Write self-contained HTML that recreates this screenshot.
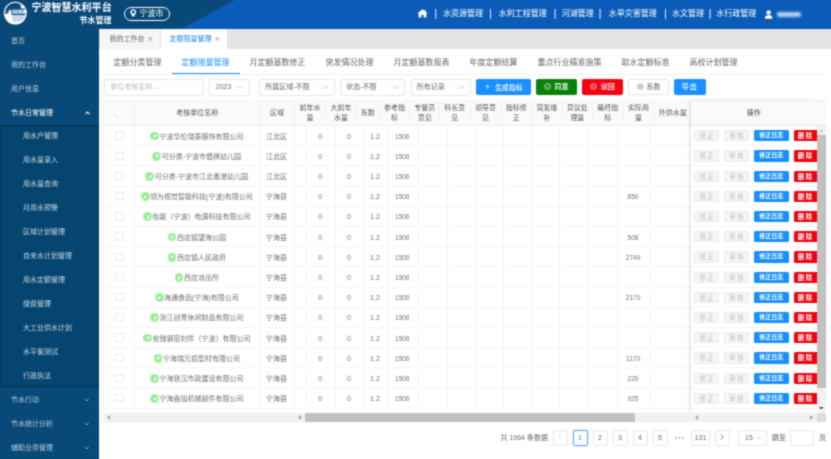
<!DOCTYPE html><html lang="zh-CN"><head><meta charset="utf-8"><title>宁波智慧水利平台 节水管理</title><style>
*{box-sizing:border-box;margin:0;padding:0}
html,body{width:831px;height:459px;overflow:hidden;background:#fff}
body{font-family:"Liberation Sans","Noto Sans CJK SC",sans-serif;font-size:7px;color:#5a5a5a;position:relative;filter:url(#soft)}
.abs{position:absolute}
#hdr{left:0;top:0;width:831px;height:28.5px;background:#0b5cb9;z-index:3}
#hdrL{left:0;top:0;width:236px;height:29px;background:#084977;clip-path:polygon(0 0,235px 0,182px 28.5px,99px 28.5px,99px 29px,0 29px);z-index:4}
#title{z-index:5;left:31.5px;top:2px;font-size:10px;font-weight:700;color:#fff;line-height:12px;white-space:nowrap;letter-spacing:0.02px}
#sub{z-index:5;left:79.5px;top:16.3px;font-size:8px;font-weight:700;color:#fff;line-height:10px;white-space:nowrap}
#city{z-index:5;left:124px;top:7px;width:45.5px;height:13.5px;border:1px solid #fff;border-radius:7px;color:#fff;font-size:8px;line-height:11.5px;white-space:nowrap}
#city span{position:absolute;left:14.5px;top:-0.5px}
#nav{z-index:5;right:0;top:0;height:28.5px;color:#fff;font-size:8px;line-height:28.5px;white-space:nowrap}
#nav span{position:absolute;top:0;line-height:28px}
#side{left:0;top:28px;width:99px;height:431px;background:#084977}
#side .it{position:absolute;left:11px;color:#b9c9d8;font-size:7px;line-height:10px;white-space:nowrap}
#side .it.w{color:#fff}
#submenu{position:absolute;left:0;top:97px;width:99px;height:261.5px;background:#06456f;box-shadow:inset 0 2px 3px -1px rgba(0,0,0,.35), inset 0 -2px 3px -1px rgba(0,0,0,.25)}
#submenu .it{left:23px;color:#c6d4e0}
.chev{position:absolute;left:85.3px;width:4px;height:4px}
#tabbar{left:99px;top:28px;width:732px;height:20.5px;background:#e4e4e4}
.tab{position:absolute;top:0.5px;height:20px;line-height:20.8px;font-size:7px;white-space:nowrap;color:#666}
.tab i{font-style:normal;color:#999;margin-left:3px;font-size:9.5px;line-height:10px;font-weight:400;vertical-align:-1.3px}
#itabs{left:103.5px;top:48.5px;width:722px;height:26px;border-bottom:1px solid #efefef}
#itabs span{position:absolute;top:8px;font-size:8px;line-height:12px;white-space:nowrap;color:#666}
#itabs span.on{color:#1890ff}
#ink{left:171.5px;top:73.3px;width:68px;height:1.2px;background:#1890ff}
.inp{position:absolute;top:79.3px;height:16.4px;border:1px solid #e8e8e8;border-radius:2px;background:#fff;font-size:7px;line-height:14px;white-space:nowrap;color:#6a6a6a}
.inp b{font-weight:400;position:absolute;left:5.2px;top:0}
.inp svg{position:absolute;right:5.5px;top:5.2px}
.btn{position:absolute;top:79.2px;height:16.3px;border-radius:2px;color:#fff;font-weight:500;font-size:7px;line-height:16px;text-align:center;white-space:nowrap}
#thead{left:103px;top:99.5px;width:722.8px;height:26.3px;background:#fafafa;border-top:1px solid #f6f6f6;border-bottom:1px solid #f0f0f0;border-left:1px solid #f6f6f6}
.th{position:absolute;top:0;height:25px;border-right:1px solid #f1f1f1;text-align:center;font-size:7px;line-height:10px;color:#5a5a5a;display:flex;align-items:center;justify-content:center}
.th span{display:block}
.vl{position:absolute;width:1px;background:#f5f5f5}
.hl{position:absolute;height:1px;background:#f6f6f6;left:103.5px;width:712.5px}
.cell{position:absolute;font-size:7px;line-height:10px;white-space:nowrap;color:#727272}
.ck{position:absolute;width:8.4px;height:8.4px;border:1px solid #ececec;border-radius:1px;background:#fff}
.gi{display:inline-block;width:8.8px;height:8.8px;border-radius:50%;background:radial-gradient(circle at 50% 50%,#8eea8e 0,#93eb93 45%,#b4f2b4 60%,#7fe37f 78%,#9aec9a 100%);vertical-align:-1.9px;margin-right:0.6px;position:relative}
.gi:after{content:"";position:absolute;left:4.4px;top:2px;left:2.5px;top:3.6px;width:4px;height:1.7px;background:#f4fff4;transform:rotate(-48deg);border-radius:1px}
#fix{left:691px;top:99.5px;width:125.5px;height:312px;background:#fff;box-shadow:-2px 0 3px rgba(0,0,0,.10)}
#fixh{left:0;top:0;width:134.8px;padding-right:9.3px;height:26px;background:#fafafa;border-top:1px solid #ececec;border-bottom:1px solid #e8e8e8;text-align:center;line-height:24px;font-size:7px;color:#444}
.rb{position:absolute;height:11.4px;border-radius:1.5px;font-size:6.4px;line-height:11.4px;text-align:center;white-space:nowrap;overflow:hidden}
.rb.d{background:#f6f6f6;border:1px solid #e9e9e9;color:#c0c0c0;line-height:9.6px;letter-spacing:1.5px;text-indent:1.5px}
.rb.b{background:#1890ff;color:#fff;font-weight:700;font-size:6px}
.rb.r{background:#f5000f;color:#fff;font-weight:700;letter-spacing:1.5px;text-indent:1px}
.pg{position:absolute;top:429.5px;height:16px;border:1px solid #e8e8e8;border-radius:2px;background:#fff;text-align:center;font-size:7px;line-height:14px;color:#6a6a6a}
</style></head><body>
<svg width="0" height="0" style="position:absolute"><filter id="soft" x="0" y="0" width="100%" height="100%" color-interpolation-filters="sRGB"><feConvolveMatrix order="3" kernelMatrix="1 2 1 2 8 2 1 2 1" divisor="20" edgeMode="duplicate" preserveAlpha="true"/></filter></svg>
<div id="hdr" class="abs"></div><div id="hdrL" class="abs"></div>
<svg class="abs" style="left:0;top:0;z-index:5" width="32" height="28" viewBox="0 0 32 28">
<defs><clipPath id="lc"><circle cx="15.3" cy="13.1" r="11"/></clipPath></defs>
<g clip-path="url(#lc)">
<path d="M3 15 L8.4 13 L9.1 9.7 L10.9 9.7 L11.8 14.9 L27 14.9 L27 25 L3 25 Z" fill="#fff"/>
<rect x="12.4" y="9.7" width="13.6" height="3.9" fill="#fff"/>
<path d="M12 16.3 C15 15.1,19 16.9,22 15.7 S25 15.3,26.4 15.3" stroke="#5f8fb8" stroke-width="0.6" fill="none"/>
<path d="M12.2 18 C15 16.8,19 18.6,22 17.4 S24.6 17,25.6 17" stroke="#5f8fb8" stroke-width="0.6" fill="none"/>
<path d="M12.4 19.7 C15 18.5,18.6 20.3,21.4 19.1 S23.6 18.8,24.4 18.8" stroke="#5f8fb8" stroke-width="0.6" fill="none"/>
<path d="M12.8 21.3 C15 20.2,17.8 21.8,20 20.8 S21.8 20.5,22.4 20.5" stroke="#5f8fb8" stroke-width="0.55" fill="none"/>
<path d="M5.4 11.6 L8 10.9 L7.8 12.4 L5.8 13Z" fill="#4d86b3"/>
</g>
<circle cx="15.3" cy="13.1" r="10.9" fill="none" stroke="#fff" stroke-width="1.1"/>
<circle cx="22.5" cy="7.1" r="1.75" fill="#fff"/>
<path d="M19 4.4 L21.6 6 L22.6 5.4 Z" fill="#e6eef6"/>
<circle cx="20.3" cy="5" r="0.6" fill="#e8f0f8"/>
<text x="12.9" y="13.1" font-family="Liberation Serif,serif" font-size="4.2" font-weight="700" fill="#3f78a8" textLength="12.4" lengthAdjust="spacingAndGlyphs">NBSL</text>
</svg>
<div id="title" class="abs">宁波智慧水利平台</div><div id="sub" class="abs">节水管理</div>
<div id="city" class="abs"><svg style="position:absolute;left:5px;top:1.3px" width="6.5" height="8.4" viewBox="0 0 6 8" preserveAspectRatio="none"><path d="M3 0.2C1.4 0.2 0.3 1.4 0.3 2.9C0.3 4.6 3 7.8 3 7.8S5.7 4.6 5.7 2.9C5.7 1.4 4.6 0.2 3 0.2Z" fill="#fff"/><circle cx="3" cy="2.9" r="1.45" fill="#084977"/></svg><span>宁波市</span></div>
<div id="nav" class="abs" style="left:400px;width:431px">
<svg style="position:absolute;left:17px;top:9px" width="11" height="9" viewBox="0 0 10 9" preserveAspectRatio="none"><path d="M5 0.3L0.2 4.6H1.5V8.6H4V5.8H6V8.6H8.5V4.6H9.8L8 3V0.9H7V2.1Z" fill="#fff"/></svg>
<span style="left:34.45px;font-size:10px;line-height:27px">|</span>
<span style="left:43px">水资源管理</span>
<span style="left:89.2px;font-size:10px;line-height:27px">|</span>
<span style="left:98.75px">水利工程管理</span>
<span style="left:153.7px;font-size:10px;line-height:27px">|</span>
<span style="left:161.75px">河湖管理</span>
<span style="left:198.7px;font-size:10px;line-height:27px">|</span>
<span style="left:208.75px">水旱灾害管理</span>
<span style="left:264.2px;font-size:10px;line-height:27px">|</span>
<span style="left:272px">水文管理</span>
<span style="left:308.7px;font-size:10px;line-height:27px">|</span>
<span style="left:316.25px">水行政管理</span>
<svg style="position:absolute;left:363.75px;top:9.5px" width="9.25" height="9" viewBox="0 0 8 9"><circle cx="4" cy="2.4" r="2.2" fill="#fff"/><path d="M0.2 8.8C0.2 6 1.8 5 4 5S7.8 6 7.8 8.8Z" fill="#fff"/></svg>
<div style="position:absolute;left:376.5px;top:11.5px;width:24.5px;height:5px;background:#b5cff0;border-radius:2px;filter:blur(0.8px)"></div>
</div>
<div id="side" class="abs">
<div class="it" style="top:8px">首页</div>
<div class="it" style="top:31.799999999999997px">我的工作台</div>
<div class="it" style="top:55.599999999999994px">用户信息</div>
<div class="it w" style="top:79.6px">节水日常管理</div>
<svg class="chev" style="top:82.89999999999999px;width:5px;left:84.8px" viewBox="0 0 5 4"><path d="M0.5 3.2L2.5 1L4.5 3.2" stroke="#fff" stroke-width="1.05" fill="none"/></svg>
<div id="submenu">
<div class="it" style="top:6.4px">用水户管理</div>
<div class="it" style="top:30.4px">用水量录入</div>
<div class="it" style="top:54.4px">用水量查询</div>
<div class="it" style="top:78.4px">月用水预警</div>
<div class="it" style="top:102.4px">区域计划管理</div>
<div class="it" style="top:126.4px">自来水计划管理</div>
<div class="it" style="top:150.4px">用水定额管理</div>
<div class="it" style="top:174.4px">缴费管理</div>
<div class="it" style="top:198.4px">大工业供水计划</div>
<div class="it" style="top:222.4px">水平衡测试</div>
<div class="it" style="top:246.4px">行政执法</div>
</div>
<div class="it" style="top:366.5px">节水行动</div>
<svg class="chev" style="top:369.5px" viewBox="0 0 4 4"><path d="M0.4 1.2L2 3L3.6 1.2" stroke="#b9c8d8" stroke-width="0.8" fill="none"/></svg>
<div class="it" style="top:390.5px">节水统计分析</div>
<svg class="chev" style="top:393.5px" viewBox="0 0 4 4"><path d="M0.4 1.2L2 3L3.6 1.2" stroke="#b9c8d8" stroke-width="0.8" fill="none"/></svg>
<div class="it" style="top:414.5px">辅助业务管理</div>
<svg class="chev" style="top:417.5px" viewBox="0 0 4 4"><path d="M0.4 1.2L2 3L3.6 1.2" stroke="#b9c8d8" stroke-width="0.8" fill="none"/></svg>
</div>
<div id="tabbar" class="abs">
<div class="tab" style="left:1px;width:60.5px;background:#f6f6f6;padding-left:9.5px;border-right:1px solid #e0e0e0">我的工作台<i>×</i></div>
<div class="tab" style="left:61.5px;width:66px;background:#fff;padding-left:9px;color:#1e88e5">定额限量管理<i>×</i></div>
</div>
<div id="itabs" class="abs">
<span style="left:10.0px">定额分类管理</span>
<span class="on" style="left:78.0px">定额限量管理</span>
<span style="left:146.0px">月定额基数修正</span>
<span style="left:222.0px">突发情况处理</span>
<span style="left:290.0px">月定额基数报表</span>
<span style="left:366.0px">年度定额结算</span>
<span style="left:434.0px">重点行业精准施策</span>
<span style="left:518.0px">取水定额标准</span>
<span style="left:586.0px">高校计划管理</span>
</div><div id="ink" class="abs"></div>
<div class="inp" style="left:104px;width:100px"><b style="color:#bfbfbf">单位考核名称...</b></div>
<div class="inp" style="left:209px;width:40.5px"><b style="left:5.8px">2023</b><svg width="6.5" height="4.5" viewBox="0 0 6.5 4.5"><path d="M0.5 0.8L3.25 3.7L6 0.8" stroke="#bdbdbd" stroke-width="0.75" fill="none"/></svg></div>
<div class="inp" style="left:259px;width:75.5px"><b>所属区域-不限</b><svg width="6.5" height="4.5" viewBox="0 0 6.5 4.5"><path d="M0.5 0.8L3.25 3.7L6 0.8" stroke="#bdbdbd" stroke-width="0.75" fill="none"/></svg></div>
<div class="inp" style="left:340px;width:65px"><b>状态-不限</b><svg width="6.5" height="4.5" viewBox="0 0 6.5 4.5"><path d="M0.5 0.8L3.25 3.7L6 0.8" stroke="#bdbdbd" stroke-width="0.75" fill="none"/></svg></div>
<div class="inp" style="left:410.5px;width:60px"><b>所有记录</b><svg width="6.5" height="4.5" viewBox="0 0 6.5 4.5"><path d="M0.5 0.8L3.25 3.7L6 0.8" stroke="#bdbdbd" stroke-width="0.75" fill="none"/></svg></div>
<div class="btn" style="left:476px;width:55px;background:#1890ff"><span style="font-size:9px;vertical-align:-0.5px;margin-right:4.5px;margin-left:1px">+</span>生成指标</div>
<div class="btn" style="left:535.8px;width:41.4px;background:#0a820a"><svg width="7" height="7" viewBox="0 0 7 7" style="vertical-align:-1.2px;margin-right:3px"><circle cx="3.5" cy="3.5" r="2.9" fill="none" stroke="#fff" stroke-width="0.7"/><path d="M2.1 3.6L3.1 4.6L4.9 2.6" stroke="#fff" stroke-width="0.7" fill="none"/></svg>同意</div>
<div class="btn" style="left:582px;width:40.6px;background:#f5000f"><svg width="7" height="7" viewBox="0 0 7 7" style="vertical-align:-1.2px;margin-right:3px"><circle cx="3.5" cy="3.5" r="2.9" fill="none" stroke="#fff" stroke-width="0.7"/><path d="M2.4 2.4L4.6 4.6M4.6 2.4L2.4 4.6" stroke="#fff" stroke-width="0.7" fill="none"/></svg><span style="margin-left:1px">驳回</span></div>
<div class="btn" style="left:628px;width:41px;background:#fff;border:1px solid #e4e4e4;color:#666;font-weight:400;line-height:14px"><svg width="7" height="7" viewBox="0 0 7 7" style="vertical-align:-1.2px;margin-right:3px"><circle cx="3.5" cy="3.5" r="2.6" fill="none" stroke="#666" stroke-width="1" stroke-dasharray="1.2 0.8"/><circle cx="3.5" cy="3.5" r="1" fill="none" stroke="#666" stroke-width="0.6"/></svg>系数</div>
<div class="btn" style="left:674px;width:31.5px;background:#1890ff;letter-spacing:1px">导出</div>
<div id="thead" class="abs">
<div class="th" style="left:0px;width:31.3px"><span><span class="ck" style="position:static;display:block"></span></span></div>
<div class="th" style="left:31.3px;width:124.7px"><span>考核单位名称</span></div>
<div class="th" style="left:156px;width:35px"><span>区域</span></div>
<div class="th" style="left:191px;width:31px"><span>前年水<br>量</span></div>
<div class="th" style="left:222px;width:30.8px"><span>大前年<br>水量</span></div>
<div class="th" style="left:252.8px;width:22.8px"><span>系数</span></div>
<div class="th" style="left:275.6px;width:30.9px"><span>参考指<br>标</span></div>
<div class="th" style="left:306.5px;width:29.5px"><span>专管员<br>意见</span></div>
<div class="th" style="left:336px;width:30.5px"><span>科长意<br>见</span></div>
<div class="th" style="left:366.5px;width:31.0px"><span>领导意<br>见</span></div>
<div class="th" style="left:397.5px;width:30.5px"><span>指标修<br>正</span></div>
<div class="th" style="left:428px;width:30.75px"><span>突发增<br>补</span></div>
<div class="th" style="left:458.75px;width:30.25px"><span>异议处<br>理量</span></div>
<div class="th" style="left:489px;width:30.5px"><span>最终指<br>标</span></div>
<div class="th" style="left:519.5px;width:31.0px"><span>实际用<br>量</span></div>
<div class="th" style="left:550.5px;width:37.5px"><span>外供水量</span></div>
</div>
<div class="vl" style="left:103px;top:125.5px;height:282.8px"></div>
<div class="vl" style="left:134px;top:125.5px;height:282.8px"></div>
<div class="vl" style="left:259px;top:125.5px;height:282.8px"></div>
<div class="vl" style="left:306px;top:125.5px;height:282.8px"></div>
<div class="vl" style="left:334.6px;top:125.5px;height:282.8px"></div>
<div class="vl" style="left:363.4px;top:125.5px;height:282.8px"></div>
<div class="vl" style="left:386.5px;top:125.5px;height:282.8px"></div>
<div class="vl" style="left:418px;top:125.5px;height:282.8px"></div>
<div class="vl" style="left:446.6px;top:125.5px;height:282.8px"></div>
<div class="vl" style="left:475.3px;top:125.5px;height:282.8px"></div>
<div class="vl" style="left:502.8px;top:125.5px;height:282.8px"></div>
<div class="vl" style="left:531px;top:125.5px;height:282.8px"></div>
<div class="vl" style="left:559.3px;top:125.5px;height:282.8px"></div>
<div class="vl" style="left:588.3px;top:125.5px;height:282.8px"></div>
<div class="vl" style="left:616.6px;top:125.5px;height:282.8px"></div>
<div class="vl" style="left:649.5px;top:125.5px;height:282.8px"></div>
<div class="vl" style="left:691px;top:125.5px;height:282.8px"></div>
<div class="vl" style="left:294px;top:125.5px;height:282.8px;background:#f6f6f6"></div>
<div class="hl" style="top:145.2px"></div>
<div class="hl" style="top:165.4px"></div>
<div class="hl" style="top:185.6px"></div>
<div class="hl" style="top:205.8px"></div>
<div class="hl" style="top:226.0px"></div>
<div class="hl" style="top:246.2px"></div>
<div class="hl" style="top:266.4px"></div>
<div class="hl" style="top:286.6px"></div>
<div class="hl" style="top:306.8px"></div>
<div class="hl" style="top:327.0px"></div>
<div class="hl" style="top:347.2px"></div>
<div class="hl" style="top:367.4px"></div>
<div class="hl" style="top:387.6px"></div>
<div class="hl" style="top:407.8px"></div>
<div class="ck" style="left:115.2px;top:131.4px"></div>
<div class="cell" style="left:134.5px;width:124.5px;top:131.5px;text-align:center"><i class="gi"></i>宁波华伦瑞泰服饰有限公司</div>
<div class="cell" style="left:259px;width:35px;top:131.5px;text-align:center">江北区</div>
<div class="cell" style="left:306px;width:28.6px;top:131.5px;text-align:center">0</div>
<div class="cell" style="left:334.6px;width:28.8px;top:131.5px;text-align:center">0</div>
<div class="cell" style="left:363.4px;width:23.1px;top:131.5px;text-align:center">1.2</div>
<div class="cell" style="left:386.5px;width:31.5px;top:131.5px;text-align:center;font-size:6.5px">1500</div>
<div class="ck" style="left:115.2px;top:151.6px"></div>
<div class="cell" style="left:134.5px;width:124.5px;top:151.7px;text-align:center"><i class="gi"></i>可分类-宁波市倡祺幼儿园</div>
<div class="cell" style="left:259px;width:35px;top:151.7px;text-align:center">江北区</div>
<div class="cell" style="left:306px;width:28.6px;top:151.7px;text-align:center">0</div>
<div class="cell" style="left:334.6px;width:28.8px;top:151.7px;text-align:center">0</div>
<div class="cell" style="left:363.4px;width:23.1px;top:151.7px;text-align:center">1.2</div>
<div class="cell" style="left:386.5px;width:31.5px;top:151.7px;text-align:center;font-size:6.5px">1500</div>
<div class="ck" style="left:115.2px;top:171.8px"></div>
<div class="cell" style="left:134.5px;width:124.5px;top:171.9px;text-align:center"><i class="gi"></i>可分类-宁波市江北甬港幼儿园</div>
<div class="cell" style="left:259px;width:35px;top:171.9px;text-align:center">江北区</div>
<div class="cell" style="left:306px;width:28.6px;top:171.9px;text-align:center">0</div>
<div class="cell" style="left:334.6px;width:28.8px;top:171.9px;text-align:center">0</div>
<div class="cell" style="left:363.4px;width:23.1px;top:171.9px;text-align:center">1.2</div>
<div class="cell" style="left:386.5px;width:31.5px;top:171.9px;text-align:center;font-size:6.5px">1500</div>
<div class="ck" style="left:115.2px;top:192.0px"></div>
<div class="cell" style="left:134.5px;width:124.5px;top:192.1px;text-align:center"><i class="gi"></i>领为视觉智能科技(宁波)有限公司</div>
<div class="cell" style="left:259px;width:35px;top:192.1px;text-align:center">宁海县</div>
<div class="cell" style="left:306px;width:28.6px;top:192.1px;text-align:center">0</div>
<div class="cell" style="left:334.6px;width:28.8px;top:192.1px;text-align:center">0</div>
<div class="cell" style="left:363.4px;width:23.1px;top:192.1px;text-align:center">1.2</div>
<div class="cell" style="left:386.5px;width:31.5px;top:192.1px;text-align:center;font-size:6.5px">1500</div>
<div class="cell" style="left:616.6px;width:32.9px;top:192.1px;text-align:center;font-size:6.5px">850</div>
<div class="ck" style="left:115.2px;top:212.2px"></div>
<div class="cell" style="left:134.5px;width:124.5px;top:212.3px;text-align:center"><i class="gi"></i>怡能（宁波）电源科技有限公司</div>
<div class="cell" style="left:259px;width:35px;top:212.3px;text-align:center">宁海县</div>
<div class="cell" style="left:306px;width:28.6px;top:212.3px;text-align:center">0</div>
<div class="cell" style="left:334.6px;width:28.8px;top:212.3px;text-align:center">0</div>
<div class="cell" style="left:363.4px;width:23.1px;top:212.3px;text-align:center">1.2</div>
<div class="cell" style="left:386.5px;width:31.5px;top:212.3px;text-align:center;font-size:6.5px">1500</div>
<div class="ck" style="left:115.2px;top:232.4px"></div>
<div class="cell" style="left:134.5px;width:124.5px;top:232.5px;text-align:center"><i class="gi"></i>西店镇望海公园</div>
<div class="cell" style="left:259px;width:35px;top:232.5px;text-align:center">宁海县</div>
<div class="cell" style="left:306px;width:28.6px;top:232.5px;text-align:center">0</div>
<div class="cell" style="left:334.6px;width:28.8px;top:232.5px;text-align:center">0</div>
<div class="cell" style="left:363.4px;width:23.1px;top:232.5px;text-align:center">1.2</div>
<div class="cell" style="left:386.5px;width:31.5px;top:232.5px;text-align:center;font-size:6.5px">1500</div>
<div class="cell" style="left:616.6px;width:32.9px;top:232.5px;text-align:center;font-size:6.5px">508</div>
<div class="ck" style="left:115.2px;top:252.6px"></div>
<div class="cell" style="left:134.5px;width:124.5px;top:252.7px;text-align:center"><i class="gi"></i>西店镇人民政府</div>
<div class="cell" style="left:259px;width:35px;top:252.7px;text-align:center">宁海县</div>
<div class="cell" style="left:306px;width:28.6px;top:252.7px;text-align:center">0</div>
<div class="cell" style="left:334.6px;width:28.8px;top:252.7px;text-align:center">0</div>
<div class="cell" style="left:363.4px;width:23.1px;top:252.7px;text-align:center">1.2</div>
<div class="cell" style="left:386.5px;width:31.5px;top:252.7px;text-align:center;font-size:6.5px">1500</div>
<div class="cell" style="left:616.6px;width:32.9px;top:252.7px;text-align:center;font-size:6.5px">2749</div>
<div class="ck" style="left:115.2px;top:272.8px"></div>
<div class="cell" style="left:134.5px;width:124.5px;top:272.9px;text-align:center"><i class="gi"></i>西店派出所</div>
<div class="cell" style="left:259px;width:35px;top:272.9px;text-align:center">宁海县</div>
<div class="cell" style="left:306px;width:28.6px;top:272.9px;text-align:center">0</div>
<div class="cell" style="left:334.6px;width:28.8px;top:272.9px;text-align:center">0</div>
<div class="cell" style="left:363.4px;width:23.1px;top:272.9px;text-align:center">1.2</div>
<div class="cell" style="left:386.5px;width:31.5px;top:272.9px;text-align:center;font-size:6.5px">1500</div>
<div class="ck" style="left:115.2px;top:293.0px"></div>
<div class="cell" style="left:134.5px;width:124.5px;top:293.1px;text-align:center"><i class="gi"></i>海通食品(宁海)有限公司</div>
<div class="cell" style="left:259px;width:35px;top:293.1px;text-align:center">宁海县</div>
<div class="cell" style="left:306px;width:28.6px;top:293.1px;text-align:center">0</div>
<div class="cell" style="left:334.6px;width:28.8px;top:293.1px;text-align:center">0</div>
<div class="cell" style="left:363.4px;width:23.1px;top:293.1px;text-align:center">1.2</div>
<div class="cell" style="left:386.5px;width:31.5px;top:293.1px;text-align:center;font-size:6.5px">1500</div>
<div class="cell" style="left:616.6px;width:32.9px;top:293.1px;text-align:center;font-size:6.5px">2170</div>
<div class="ck" style="left:115.2px;top:313.2px"></div>
<div class="cell" style="left:134.5px;width:124.5px;top:313.3px;text-align:center"><i class="gi"></i>浙江创青休闲制品有限公司</div>
<div class="cell" style="left:259px;width:35px;top:313.3px;text-align:center">宁海县</div>
<div class="cell" style="left:306px;width:28.6px;top:313.3px;text-align:center">0</div>
<div class="cell" style="left:334.6px;width:28.8px;top:313.3px;text-align:center">0</div>
<div class="cell" style="left:363.4px;width:23.1px;top:313.3px;text-align:center">1.2</div>
<div class="cell" style="left:386.5px;width:31.5px;top:313.3px;text-align:center;font-size:6.5px">1500</div>
<div class="ck" style="left:115.2px;top:333.4px"></div>
<div class="cell" style="left:134.5px;width:124.5px;top:333.5px;text-align:center"><i class="gi"></i>安驰钢密封件（宁波）有限公司</div>
<div class="cell" style="left:259px;width:35px;top:333.5px;text-align:center">宁海县</div>
<div class="cell" style="left:306px;width:28.6px;top:333.5px;text-align:center">0</div>
<div class="cell" style="left:334.6px;width:28.8px;top:333.5px;text-align:center">0</div>
<div class="cell" style="left:363.4px;width:23.1px;top:333.5px;text-align:center">1.2</div>
<div class="cell" style="left:386.5px;width:31.5px;top:333.5px;text-align:center;font-size:6.5px">1500</div>
<div class="ck" style="left:115.2px;top:353.6px"></div>
<div class="cell" style="left:134.5px;width:124.5px;top:353.7px;text-align:center"><i class="gi"></i>宁海瑞元铝型材有限公司</div>
<div class="cell" style="left:259px;width:35px;top:353.7px;text-align:center">宁海县</div>
<div class="cell" style="left:306px;width:28.6px;top:353.7px;text-align:center">0</div>
<div class="cell" style="left:334.6px;width:28.8px;top:353.7px;text-align:center">0</div>
<div class="cell" style="left:363.4px;width:23.1px;top:353.7px;text-align:center">1.2</div>
<div class="cell" style="left:386.5px;width:31.5px;top:353.7px;text-align:center;font-size:6.5px">1500</div>
<div class="cell" style="left:616.6px;width:32.9px;top:353.7px;text-align:center;font-size:6.5px">1170</div>
<div class="ck" style="left:115.2px;top:373.8px"></div>
<div class="cell" style="left:134.5px;width:124.5px;top:373.9px;text-align:center"><i class="gi"></i>宁海铁汉市政建设有限公司</div>
<div class="cell" style="left:259px;width:35px;top:373.9px;text-align:center">宁海县</div>
<div class="cell" style="left:306px;width:28.6px;top:373.9px;text-align:center">0</div>
<div class="cell" style="left:334.6px;width:28.8px;top:373.9px;text-align:center">0</div>
<div class="cell" style="left:363.4px;width:23.1px;top:373.9px;text-align:center">1.2</div>
<div class="cell" style="left:386.5px;width:31.5px;top:373.9px;text-align:center;font-size:6.5px">1500</div>
<div class="cell" style="left:616.6px;width:32.9px;top:373.9px;text-align:center;font-size:6.5px">220</div>
<div class="ck" style="left:115.2px;top:394.0px"></div>
<div class="cell" style="left:134.5px;width:124.5px;top:394.1px;text-align:center"><i class="gi"></i>宁海鑫旭机械部件有限公司</div>
<div class="cell" style="left:259px;width:35px;top:394.1px;text-align:center">宁海县</div>
<div class="cell" style="left:306px;width:28.6px;top:394.1px;text-align:center">0</div>
<div class="cell" style="left:334.6px;width:28.8px;top:394.1px;text-align:center">0</div>
<div class="cell" style="left:363.4px;width:23.1px;top:394.1px;text-align:center">1.2</div>
<div class="cell" style="left:386.5px;width:31.5px;top:394.1px;text-align:center;font-size:6.5px">1500</div>
<div class="cell" style="left:616.6px;width:32.9px;top:394.1px;text-align:center;font-size:6.5px">925</div>
<div id="fix" class="abs"><div id="fixh" class="abs">操作</div>
<div class="hl" style="left:0;width:125.5px;top:45.7px"></div>
<div class="rb d" style="left:3.2px;width:24.8px;top:30.6px">修正</div>
<div class="rb d" style="left:33px;width:24.8px;top:30.6px">审核</div>
<div class="rb b" style="left:62.7px;width:35px;top:30.6px">修正日志</div>
<div class="rb r" style="left:102.7px;width:23px;top:30.6px;border-radius:1.5px 0 0 1.5px">删除</div>
<div class="hl" style="left:0;width:125.5px;top:65.9px"></div>
<div class="rb d" style="left:3.2px;width:24.8px;top:50.8px">修正</div>
<div class="rb d" style="left:33px;width:24.8px;top:50.8px">审核</div>
<div class="rb b" style="left:62.7px;width:35px;top:50.8px">修正日志</div>
<div class="rb r" style="left:102.7px;width:23px;top:50.8px;border-radius:1.5px 0 0 1.5px">删除</div>
<div class="hl" style="left:0;width:125.5px;top:86.1px"></div>
<div class="rb d" style="left:3.2px;width:24.8px;top:71.0px">修正</div>
<div class="rb d" style="left:33px;width:24.8px;top:71.0px">审核</div>
<div class="rb b" style="left:62.7px;width:35px;top:71.0px">修正日志</div>
<div class="rb r" style="left:102.7px;width:23px;top:71.0px;border-radius:1.5px 0 0 1.5px">删除</div>
<div class="hl" style="left:0;width:125.5px;top:106.3px"></div>
<div class="rb d" style="left:3.2px;width:24.8px;top:91.2px">修正</div>
<div class="rb d" style="left:33px;width:24.8px;top:91.2px">审核</div>
<div class="rb b" style="left:62.7px;width:35px;top:91.2px">修正日志</div>
<div class="rb r" style="left:102.7px;width:23px;top:91.2px;border-radius:1.5px 0 0 1.5px">删除</div>
<div class="hl" style="left:0;width:125.5px;top:126.5px"></div>
<div class="rb d" style="left:3.2px;width:24.8px;top:111.4px">修正</div>
<div class="rb d" style="left:33px;width:24.8px;top:111.4px">审核</div>
<div class="rb b" style="left:62.7px;width:35px;top:111.4px">修正日志</div>
<div class="rb r" style="left:102.7px;width:23px;top:111.4px;border-radius:1.5px 0 0 1.5px">删除</div>
<div class="hl" style="left:0;width:125.5px;top:146.7px"></div>
<div class="rb d" style="left:3.2px;width:24.8px;top:131.6px">修正</div>
<div class="rb d" style="left:33px;width:24.8px;top:131.6px">审核</div>
<div class="rb b" style="left:62.7px;width:35px;top:131.6px">修正日志</div>
<div class="rb r" style="left:102.7px;width:23px;top:131.6px;border-radius:1.5px 0 0 1.5px">删除</div>
<div class="hl" style="left:0;width:125.5px;top:166.9px"></div>
<div class="rb d" style="left:3.2px;width:24.8px;top:151.8px">修正</div>
<div class="rb d" style="left:33px;width:24.8px;top:151.8px">审核</div>
<div class="rb b" style="left:62.7px;width:35px;top:151.8px">修正日志</div>
<div class="rb r" style="left:102.7px;width:23px;top:151.8px;border-radius:1.5px 0 0 1.5px">删除</div>
<div class="hl" style="left:0;width:125.5px;top:187.1px"></div>
<div class="rb d" style="left:3.2px;width:24.8px;top:172.0px">修正</div>
<div class="rb d" style="left:33px;width:24.8px;top:172.0px">审核</div>
<div class="rb b" style="left:62.7px;width:35px;top:172.0px">修正日志</div>
<div class="rb r" style="left:102.7px;width:23px;top:172.0px;border-radius:1.5px 0 0 1.5px">删除</div>
<div class="hl" style="left:0;width:125.5px;top:207.3px"></div>
<div class="rb d" style="left:3.2px;width:24.8px;top:192.2px">修正</div>
<div class="rb d" style="left:33px;width:24.8px;top:192.2px">审核</div>
<div class="rb b" style="left:62.7px;width:35px;top:192.2px">修正日志</div>
<div class="rb r" style="left:102.7px;width:23px;top:192.2px;border-radius:1.5px 0 0 1.5px">删除</div>
<div class="hl" style="left:0;width:125.5px;top:227.5px"></div>
<div class="rb d" style="left:3.2px;width:24.8px;top:212.4px">修正</div>
<div class="rb d" style="left:33px;width:24.8px;top:212.4px">审核</div>
<div class="rb b" style="left:62.7px;width:35px;top:212.4px">修正日志</div>
<div class="rb r" style="left:102.7px;width:23px;top:212.4px;border-radius:1.5px 0 0 1.5px">删除</div>
<div class="hl" style="left:0;width:125.5px;top:247.7px"></div>
<div class="rb d" style="left:3.2px;width:24.8px;top:232.6px">修正</div>
<div class="rb d" style="left:33px;width:24.8px;top:232.6px">审核</div>
<div class="rb b" style="left:62.7px;width:35px;top:232.6px">修正日志</div>
<div class="rb r" style="left:102.7px;width:23px;top:232.6px;border-radius:1.5px 0 0 1.5px">删除</div>
<div class="hl" style="left:0;width:125.5px;top:267.9px"></div>
<div class="rb d" style="left:3.2px;width:24.8px;top:252.8px">修正</div>
<div class="rb d" style="left:33px;width:24.8px;top:252.8px">审核</div>
<div class="rb b" style="left:62.7px;width:35px;top:252.8px">修正日志</div>
<div class="rb r" style="left:102.7px;width:23px;top:252.8px;border-radius:1.5px 0 0 1.5px">删除</div>
<div class="hl" style="left:0;width:125.5px;top:288.1px"></div>
<div class="rb d" style="left:3.2px;width:24.8px;top:273.0px">修正</div>
<div class="rb d" style="left:33px;width:24.8px;top:273.0px">审核</div>
<div class="rb b" style="left:62.7px;width:35px;top:273.0px">修正日志</div>
<div class="rb r" style="left:102.7px;width:23px;top:273.0px;border-radius:1.5px 0 0 1.5px">删除</div>
<div class="hl" style="left:0;width:125.5px;top:308.3px"></div>
<div class="rb d" style="left:3.2px;width:24.8px;top:293.2px">修正</div>
<div class="rb d" style="left:33px;width:24.8px;top:293.2px">审核</div>
<div class="rb b" style="left:62.7px;width:35px;top:293.2px">修正日志</div>
<div class="rb r" style="left:102.7px;width:23px;top:293.2px;border-radius:1.5px 0 0 1.5px">删除</div>
</div>
<div class="abs" style="left:816.5px;top:126.3px;width:9.5px;height:286px;background:#f1f1f1"></div>
<div class="abs" style="left:816.5px;top:135.4px;width:9.5px;height:253px;background:#c1c1c1"></div>
<svg class="abs" style="left:819px;top:129.5px" width="4.4" height="2.6" viewBox="0 0 5 3"><path d="M0 3L2.5 0L5 3Z" fill="#a8a8a8"/></svg>
<svg class="abs" style="left:819px;top:406.5px" width="4.6" height="2.8" viewBox="0 0 5 3"><path d="M0 0L2.5 3L5 0Z" fill="#505050"/></svg>
<div class="abs" style="left:103.5px;top:412.8px;width:722.5px;height:9.2px;background:#f1f1f1"></div>
<div class="abs" style="left:305px;top:412.8px;width:329.5px;height:9.2px;background:#c1c1c1"></div>
<div class="abs" style="left:816.5px;top:412.8px;width:9.5px;height:9.2px;background:#dcdcdc"></div>
<svg class="abs" style="left:106.5px;top:414.5px" width="3" height="5" viewBox="0 0 3 5"><path d="M3 0L0 2.5L3 5Z" fill="#a3a3a3"/></svg>
<svg class="abs" style="left:298.5px;top:414.5px" width="3" height="5" viewBox="0 0 3 5"><path d="M0 0L3 2.5L0 5Z" fill="#a3a3a3"/></svg>
<svg class="abs" style="left:695px;top:414.5px" width="3" height="5" viewBox="0 0 3 5"><path d="M3 0L0 2.5L3 5Z" fill="#a3a3a3"/></svg>
<svg class="abs" style="left:810px;top:414.5px" width="3" height="5" viewBox="0 0 3 5"><path d="M0 0L3 2.5L0 5Z" fill="#a3a3a3"/></svg>
<div class="abs" style="left:500.5px;top:432.5px;font-size:7px;line-height:10px;white-space:nowrap;color:#6a6a6a">共 1964 条数据</div>
<div class="pg" style="left:552.5px;width:15px;color:#c8c8c8"><svg width="4" height="6" viewBox="0 0 4 6" style="vertical-align:-0.5px"><path d="M3.2 0.5L0.8 3L3.2 5.5" stroke="#c0c0c0" stroke-width="0.7" fill="none"/></svg></div>
<div class="pg" style="left:572.5px;width:15px;border-color:#5aaaf8;color:#1890ff;box-shadow:0 0 0 1px rgba(24,144,255,.12)">1</div>
<div class="pg" style="left:592.5px;width:15px">2</div>
<div class="pg" style="left:612.5px;width:15px">3</div>
<div class="pg" style="left:632.5px;width:15px">4</div>
<div class="pg" style="left:652.5px;width:15px">5</div>
<div class="abs" style="left:672.5px;top:429.5px;width:15px;text-align:center;font-size:7px;line-height:15px;color:#bbb;letter-spacing:1px">•••</div>
<div class="pg" style="left:691px;width:19px">131</div>
<div class="pg" style="left:714.5px;width:15.5px"><svg width="4" height="6" viewBox="0 0 4 6" style="vertical-align:-0.5px"><path d="M0.8 0.5L3.2 3L0.8 5.5" stroke="#555" stroke-width="0.7" fill="none"/></svg></div>
<div class="pg" style="left:738px;width:29px;text-align:left;padding-left:6px">15 <svg width="5" height="4" viewBox="0 0 5 4" style="margin-left:2px"><path d="M0.4 0.8L2.5 3L4.6 0.8" stroke="#bbb" stroke-width="0.7" fill="none"/></svg></div>
<div class="abs" style="left:772px;top:432.5px;font-size:7px;line-height:10px;white-space:nowrap;color:#555">跳至</div>
<div class="pg" style="left:790px;width:24px"></div>
<div class="abs" style="left:819px;top:432.5px;font-size:7px;line-height:10px;white-space:nowrap;color:#555">页</div>
</body></html>
